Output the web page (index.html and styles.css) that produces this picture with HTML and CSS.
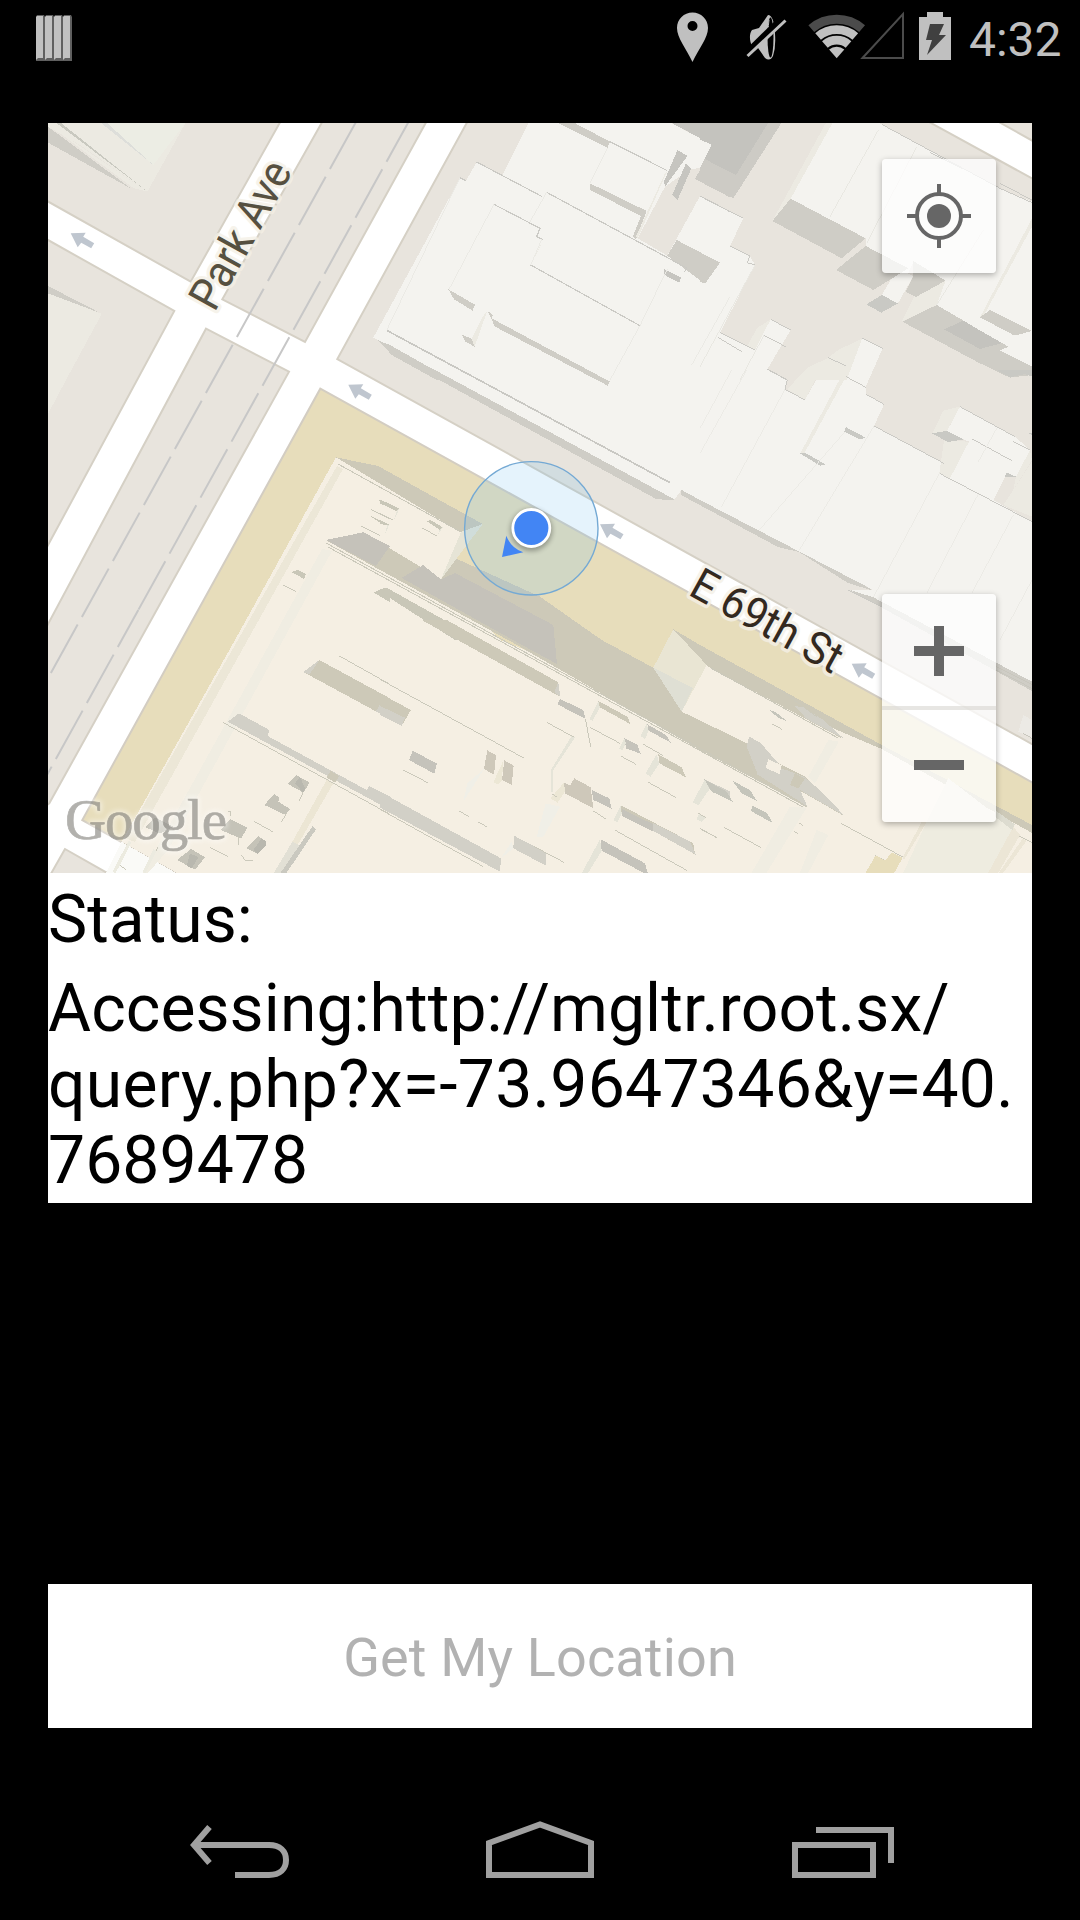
FILE: index.html
```html
<!DOCTYPE html>
<html lang="en">
<head>
<meta charset="utf-8">
<title>Get My Location</title>
<link rel="stylesheet" href="styles.css">
</head>
<body>
<div class="screen">
  <header class="status-bar">
    <svg class="notification" width="36" height="46" viewBox="0 0 36 46">
      <g id="stripe"><path d="M1 0H8L9 2V46H0V2Z" fill="#5f5f5f"/><path d="M1 1H7V43H2L0 45V2Z" fill="#c0c0c0"/></g>
      <use href="#stripe" x="9"/><use href="#stripe" x="18"/><use href="#stripe" x="27"/>
    </svg>
    <div class="status-icons">
      <svg width="33" height="75" viewBox="676 0 33 75"><path fill="#c0c0c0" fill-rule="evenodd" d="M692.5 12.5C684 12.5 677 19 677 28C677 38 686 48 692.5 62C699 48 708 38 708 28C708 19 701 12.5 692.5 12.5ZM692.5 21A5 5 0 1 1 692.5 31A5 5 0 1 1 692.5 21Z"/></svg>
      <svg class="mute" width="41" height="75" viewBox="746 0 41 75">
        <path fill="#c0c0c0" d="M768 15L759 28L752 30C749 34 749.500 41 752 46L756 45L765 58Q770 62 773 56Q776 47 775 34Q774 15 768 15Z"/>
        <ellipse cx="770.500" cy="37.500" rx="3" ry="20" fill="#000"/>
        <path d="M769 20Q767 32 771 36" stroke="#c0c0c0" fill="none"/>
        <path d="M745 55L784 17" stroke="#000" stroke-width="7"/><path d="M747.500 56L785.500 20.500" stroke="#c0c0c0" stroke-width="3"/>
      </svg>
      <svg class="wifi" width="59" height="75" viewBox="807 0 59 75" fill="none">
        <path d="M811.300 28.600A39.100 39.100 0 0 1 862.100 28.600" stroke="#4b4b4b" stroke-width="9"/>
        <g stroke="#c0c0c0" stroke-width="8.700"><path d="M818.100 36.500A28.700 28.700 0 0 1 855.300 36.500"/><path d="M824.900 44.500A18.100 18.100 0 0 1 848.500 44.500"/></g>
        <path d="M836.700 58.300L829.100 49.500A11.600 11.600 0 0 1 844.300 49.500Z" fill="#c0c0c0"/>
      </svg>
      <svg class="signal" width="44" height="75" viewBox="860 0 44 75"><path d="M862.500 58L903 14V58Z" fill="none" stroke="#4b4b4b" stroke-width="2"/></svg>
      <svg class="battery" width="32" height="75" viewBox="919 0 32 75"><path d="M927 12H943V17H951V60H919V17H927Z" fill="#c0c0c0"/><path d="M930 24H944L939 35H946L927 55L932 40H926Z" fill="#404040"/></svg>
      <span class="clock">4:32</span>
    </div>
  </header>

  <main class="content">
    <section class="panel">
      <div class="map">
        <svg class="map-canvas" width="984" height="750" viewBox="48 123 984 750">
          <defs>
            <path id="one-way" d="M0 0L15 -.5L12.500 3.500L23.500 10L20.500 15L10.500 9.500L7 14Z" fill="#bfc6cf"/>
            <filter id="glow" x="-20%" y="-40%" width="140%" height="180%"><feGaussianBlur stdDeviation="2.500"/></filter>
          </defs>
          <rect x="48" y="123" width="984" height="750" fill="#fff"/>
          <!-- city blocks -->
          <g fill="#e8e4dd" stroke="#d5d0c5" stroke-width="2">
            <path d="M40 197L190.700 281.700L283 117H40Z"/>
            <path d="M40 235.500L174.300 311L40 560Z"/>
            <path d="M325 117L222.300 299.300L305 342L429 117Z"/>
            <path d="M206 328.700L289 371.700L49.300 803.300L40 810V639Z"/>
            <path d="M470 117L337.300 359L1040 748.500V182.800L920 117Z"/>
            <path d="M990 117L1040 145V117Z"/>
            <path d="M65 849L48 879H118L106.700 872.700Z"/>
          </g>
          <path d="M320.300 388.700L1040 786.700V880H189L82.300 820Z" fill="#e7ddbb" stroke="#d3cdc2" stroke-width="2"/>
          <g stroke="#c7c7c7" stroke-width="2" stroke-dasharray="55.300 8.700">
            <path d="M356.700 120.700L47 680"/><path d="M413.300 113.300L138.300 610"/><path d="M138.300 610L47 775" stroke-dashoffset="13"/>
          </g>

          <g shape-rendering="crispEdges">
          <!-- north-west corner -->
          <g transform="translate(40 110) scale(.33333)">
            <path d="M24 38H437L322 245L120 105L24 50Z" fill="#eceae2"/>
            <path d="M185 38H437L340 165Z" fill="#ecede4"/>
            <path d="M24 50L275 237L24 98Z" fill="#cfcdc6"/>
            <path d="M24 43L322 245L280 234Z" fill="#eceae2"/>
            <path d="M48 38H62L322 245Z" fill="#c9c9c0"/>
            <path d="M182 38H200L340 165Z" fill="#dddeda"/>
            <path d="M24 540L185 612L78 810L24 912Z" fill="#eceae2"/><path d="M24 528L183 610L24 550Z" fill="#cfcdc6"/>
          </g>
          <!-- rooftops north of E 69th St -->
          <path fill="#cfcdc6" d="M373 336L392 354L656.700 499.300L674 500V480ZM681 488V495L778 547L799 552L848 583L874 591L799 546ZM850 590L1032 691V675L873 590Z"/>
          <path fill="#f4f3ef" d="M373.300 337.700L460 178.300L466 180.700L476.700 162L502.300 175L528.300 123H671L711.700 144.300L700 167.700L689 170L665 186.700L637.700 238.300L667.300 255.700L700 196L743.300 218.300L730 246L750 256L755 265L720 332.700L750 348L770.700 319.300L790.700 330L767.300 369.300L787.300 380L785 389.300L805 400L828.300 357.700L846 366L862.300 338.300L882.700 348.300L865.700 386.700V394L884 404.300L874 426L944 463.300L939.300 473.300L950 477.300L969 441.700L946.700 431.700L960 406.700L1015 436.700L1030 450L1016 476.700L1006.700 473.300L993.300 500L1032 521.700V681.700L873.300 597.300L850 590L873.300 590L700 500L681.700 490L674.300 499.300L435 370Z"/>
          <g transform="translate(380 110) scale(.33333)">
            <path fill="#cfcdc6" d="M533 38H582L690 95L683 113ZM630 220L800 303L768 387L758 380L783 318L630 240ZM890 390L1020 458L973 521L862 437ZM205 538L285 584L278 602L222 568ZM322 602L338 615L335 625L690 815L683 827L345 650ZM245 674L275 686L284 710L256 695ZM0 695L30 705L215 810H170L35 735Z"/>
            <path fill="#eceae2" d="M322 602L284 710L275 686L305 625ZM862 182L773 385L768 380L855 190ZM485 400L450 465L465 440Z"/>
            <path fill="#c6c5c0" d="M892 121L923 137L855 230L852 215ZM918 160L934 175L893 269L877 254ZM852 477L904 503L897 518L852 494ZM873 38H1050V190L978 147L995 103Z"/>
            <path fill="#cdcbc5" d="M978 147L1050 185V262L945 207Z"/>
            <path fill="none" stroke="#cbcac5" stroke-width="3.500" d="M240 203L258 212M290 156L487 260M500 247L920 474L913 487M342 283L480 355L470 380L488 388M452 465L780 647M690 95L862 182M960 258L1050 305"/>
            <path fill="none" stroke="#c9c8c3" stroke-width="5" d="M20 661L870 1118"/>
            <path fill="none" stroke="#ebeae5" stroke-width="3" d="M342 283L207 538M500 247L450 335M862 477L780 647L690 810M683 113L630 220M240 203L20 661M1050 560L935 765M485 388L452 465"/>
          </g>
          <g transform="translate(700 110) scale(.33333)">
            <path fill="#cdcbc5" d="M0 38H245L100 265L0 212Z"/><path fill="#c4c3be" d="M0 38H205L108 195L0 140Z"/><path fill="#f4f3ef" d="M0 88L35 105L0 175Z"/>
            <path fill="#eceae2" d="M378 38H398L320 266L217 333ZM497 385L640 170V200L425 445ZM212 628L170 655L142 710L165 720ZM487 685L415 720L385 743L320 775L300 810H440ZM710 585L605 635L740 360H830Z"/>
            <path fill="#f4f3ef" d="M398 38H535L900 235L996 275V770L900 722L925 710L820 650L710 585L737 512L640 455L580 590L545 555L590 480L497 408V385L272 266Z"/>
            <path fill="#cfcdc6" d="M272 266L497 385L425 445L217 333ZM497 408L625 475L520 540L408 480ZM640 453L737 512L648 561L617 545L640 500ZM710 585L925 710L900 722L996 770V795L930 803L830 755L607 635ZM870 600L996 663V675H940L840 622ZM0 428L60 458L15 521L0 515Z"/>
            <path fill="#f4f3ef" d="M612 484L640 498L594 580L545 555Z"/>
            <path fill="#c9c9c4" d="M545 555L594 580L544 608L499 583Z"/><path fill="#c4c3be" d="M790 632L910 698L840 717L732 658Z"/>
            <path fill="#f4f3ef" d="M820 650L840 622L940 678L996 663V770L900 722L925 710Z"/>
            <path fill="#eceae2" d="M840 622L996 325V350L855 610Z"/>
            <path fill="none" stroke="#cbcac5" stroke-width="3" d="M545 43L900 235L996 278M900 220L996 270M690 128L790 178M0 258L130 325M90 408L150 438L142 458L165 465M60 668L165 720M55 683L125 725M212 628L272 660M192 676L257 710M202 778L257 808M487 685L548 715M385 743L438 768"/>
            <path fill="none" stroke="#e9e8e2" stroke-width="3" d="M535 60L390 320M650 110L500 400M165 465L0 770M850 360L710 585M192 676L120 810"/>
          </g>
          <g transform="translate(700 370) scale(.33333)">
            <path fill="#eceae2" d="M315 0H360L315 90L262 58ZM418 30H432L312 252H300ZM780 110L730 122L697 190L740 185ZM732 212L807 215L750 325L718 310ZM996 275V440L910 405ZM948 320L990 240L996 270L940 360Z"/>
            <path fill="#c9c9c4" d="M300 250L318 250L376 283L360 287ZM437 171L497 203L480 209L433 185ZM740 183L792 208L745 216L694 190ZM920 307L948 320H915ZM890 0H996V20L975 12L930 22ZM985 188H996V197Z"/>
            <path fill="none" stroke="#cbcac5" stroke-width="3" d="M208 0L262 30L255 58L315 90M438 20L498 52M497 72L552 103M522 168L732 280M718 310L996 455M780 110L945 200M940 215L990 240M817 207L937 273M445 660L700 790"/>
            <path fill="none" stroke="#ecebe6" stroke-width="3" d="M95 0L0 175M140 0L0 250M255 58L65 410M435 185L178 480M522 168L298 540M718 310L520 682M835 372L680 670M940 435L815 670M996 630L900 810M890 175L835 275"/>
          </g>

          <!-- block south of E 69th St -->
          <path fill="#f5efe3" d="M336 457.300L461 532.300L441 579.300L500 640L653.300 700L681.700 711.700L706.700 665L881.700 748L1032 833V873H177L121.700 841.700L235 640Z"/>
          <path fill="#fafaf7" d="M121.700 842L106 873H176Z"/>
          <path fill="#cdc9b8" d="M336 457.300L378 466L482.700 524L461 532.300ZM673.300 629.300L700 645L881.700 745L1032 825V833L881.700 749L830 727L843 739L711 668L706 665Z"/>
          <path fill="#cdc9b8" d="M325.700 540L363.300 532.300L441 579.300L455 558L540 596.700L601.700 640L653.300 667.700L681.700 711.700L730 735L746.700 743.300L778 763L805 776.700L844 816L785 782L807 807L700 750L511.700 642L380 570Z"/>
          <path fill="#c5c2ba" d="M325.700 540L363.300 532.300L390 546L376 566ZM423 565L441 579.300L455 573L553.300 625L557 664L511 639L401.700 578Z"/>
          <path fill="#e6e4d6" d="M482.700 524L441 579.300L461 532Z"/>
          <path fill="#e9e5d3" d="M673.300 629.300L653.300 667.700L681.700 711.700L706.700 665Z"/><path fill="#dfdfd4" d="M653.300 667.700L693 688L681.700 711.700Z"/>
          <path fill="#ece7d7" d="M337 466L343 469L135 842L125 838Z"/>
          <path fill="#f0ede2" d="M322 549L332 551L168 850L148 873H143Z"/>
          <g fill="none" stroke="#cbc9bb">
            <path d="M338 464L461 532M326 543L510 644L807 807M711 668L838 738M328 547L500 641L803 807"/>
          </g>
          <g transform="translate(40 370) scale(.33333)">
            <path fill="#c9c7b8" d="M1012 388L1050 405V412ZM985 435L1048 463L1030 465ZM753 606L775 600L797 612L793 627ZM1002 668L1035 652L1050 660V697Z"/>
            <path fill="none" stroke="#cbc9bb" stroke-width="3" d="M993 418L1050 447M963 468L1020 497M730 645L768 665"/>
          </g>
          <g transform="translate(380 370) scale(.33333)">
            <path fill="#c9c7b8" d="M0 388L58 416L50 424L0 400ZM140 453L152 450L188 472L180 480ZM0 450L28 464L0 462ZM0 665L18 652L300 810H225Z"/>
            <path fill="#e6e5d9" d="M50 424L58 416L42 450ZM180 478L188 472L172 497ZM22 465L28 464L14 494Z"/>
            <path fill="none" stroke="#cbc9bb" stroke-width="3" d="M0 430L40 450M127 475L170 497"/>
          </g>
          <g transform="translate(40 620) scale(.33333)">
            <path fill="#cdc9b8" d="M790 156L838 120L1050 235V297Z"/><path fill="#d2d0c7" d="M790 156L838 120L808 164ZM1020 253L1050 268V297L1008 274ZM563 305L597 280L688 330L683 348L980 510L988 498L1050 530V570L565 306Z"/>
            <path fill="#ece6d4" d="M860 480L880 490L770 680L757 665Z"/><path fill="#cdc9b8" d="M872 453L898 468L885 488L860 472Z"/>
            <path fill="#e2e0d5" d="M757 665L778 675L735 758H702Z"/><path fill="#cac9c0" d="M818 618L828 628L740 758H722Z"/>
            <path fill="#c5c3b8" d="M768 465L809 488L790 518L744 492ZM702 522L718 532L715 545L750 567L737 585L673 555ZM570 597L622 623L603 656L543 630ZM453 687L495 712L465 749L411 720ZM345 592L400 620L360 641L317 622ZM655 648L678 664L653 702L620 685Z"/>
            <path fill="#b9b8af" d="M765 490L780 470L795 505L790 518ZM655 648L665 655L640 690L653 702L678 675V664ZM450 700L475 712L455 745L440 737Z"/>
            <path fill="none" stroke="#cbc9bb" stroke-width="3" d="M898 108L1050 193M550 308L1050 583M642 604L698 635M510 682L564 710M790 515L778 542M740 580L724 606M597 650V676M605 706L617 723H638M240 736L258 748M565 574H571V587M355 680L325 730"/>
            <path fill="none" stroke="#ecebe0" stroke-width="10" d="M270 665L222 758M345 690L312 758"/>
          </g>
          <g transform="translate(380 620) scale(.33333)">
            <path fill="#cdc9b8" d="M125 0H200L535 187L540 230ZM0 220L93 270L65 317L0 285ZM655 243L742 290L752 313L660 262ZM835 403L905 442L918 472L838 430ZM723 556L940 670L945 703L725 580Z"/>
            <path fill="#d2d0c7" d="M0 258L75 293L65 317L0 285ZM535 187L541 230L523 217ZM0 515L363 715L360 755L0 563ZM402 647L498 698V737L400 685ZM820 610L930 665L947 704L820 633ZM975 478L1050 515V540L990 510Z"/>
            <path fill="#c5c3bb" d="M98 393L171 430L163 461L87 420ZM540 237L610 270L616 296L532 253ZM802 313L858 345L872 368L806 332ZM733 354L772 374L782 401L738 385ZM725 567L818 612V634L725 588ZM662 658L795 730L803 758H790L665 692ZM635 510L688 535L695 566L640 540Z"/>
            <path fill="#cec8ba" d="M322 391L348 405L342 464L312 447L315 430ZM373 421L401 437L395 494L366 480ZM583 475L632 502L640 565L555 520L552 488L570 497Z"/>
            <path fill="#e5e4d8" d="M655 243L660 262L638 302L628 297ZM800 312L806 332L795 357L782 348ZM733 354L738 370L728 390L717 387ZM830 403L838 430L812 470L797 460ZM723 556L725 580L713 607L700 600ZM660 658L665 692L625 758H606ZM975 478L988 508L955 556L938 547ZM575 347L585 352L520 450V515H513V450ZM958 580L977 592L965 605L949 598Z"/>
            <path fill="#ece7d5" d="M370 422L366 480L355 494L340 487ZM552 488L555 515L533 548L511 535Z"/>
            <path fill="#f0efe7" d="M497 550L540 560L490 650H470ZM312 447L250 545L262 490ZM363 715L400 685L395 665Z"/>
            <path fill="none" stroke="#cbc9bb" stroke-width="3" d="M0 178L433 415M500 307L583 352M616 296L632 380M630 322L720 370M790 373L850 407M724 409L768 433M805 487L887 532M640 573L678 597M706 631L920 751M0 568L310 740M238 573L266 590M295 606L320 620M70 450L143 488M463 680L552 727M515 522L530 530M955 580L977 592M963 628L1010 652M1033 622L1050 632M995 147L1050 175"/>
          </g>
          <g transform="translate(700 620) scale(.33333)">
            <path fill="#f0ede2" d="M385 360L417 365L345 490L325 470ZM270 560L320 563L200 758H155ZM350 630L385 645L325 758H300Z"/>
            <path fill="#d2d0c7" d="M285 258L310 262L370 300L432 356L320 297ZM198 437L260 450L315 472L365 515L434 588L300 510L322 559L170 462ZM147 350L180 367L235 430L205 425L195 455L172 460L140 380Z"/>
            <path fill="#cdc9b8" d="M285 460L315 475L295 505L270 495Z"/><path fill="#f5efe3" d="M205 418L245 436L238 463L197 443Z"/>
            <path fill="#c5c5bb" d="M208 270L225 275L260 303L235 294ZM13 478L80 515L98 545L35 515ZM97 482L150 510L170 542L125 520ZM158 558L200 578L219 610L153 573Z"/>
            <path fill="none" stroke="#cbc9bb" stroke-width="3" d="M217 312L246 328M0 625L50 653M72 622L183 683M423 610L610 712M525 706L556 723M297 608L308 616M282 634L294 640M955 647L996 668M0 583L18 592M235 205L350 290"/>
            <path fill="#e7ddbb" d="M527 706L556 722L575 697L608 713L583 758H497Z"/><path fill="#eeece0" d="M745 475L940 625L865 758H610L680 606Z"/>
            <path fill="#ece6d6" d="M665 606H680L612 720L608 713ZM940 620L960 645L895 758H865ZM968 656L980 662L910 758H897Z"/>
            <path fill="#dddcd0" d="M885 570L945 613L937 630L885 590Z"/><path fill="#eceae5" d="M970 285L996 300V355L955 335Z"/>
            <path fill="none" stroke="#c9c7be" stroke-width="3" d="M888 140L996 193M888 150L996 205M968 340L996 355"/>
          </g>
          </g>

          <use href="#one-way" x="70.700" y="233.300"/><use href="#one-way" x="348.300" y="384.700"/>
          <use href="#one-way" x="600" y="524.300"/><use href="#one-way" x="851.700" y="663.700"/>
          <g class="street">
            <text class="park" transform="translate(214.500 313) rotate(-61)" textLength="162" lengthAdjust="spacingAndGlyphs">Park Ave</text>
            <text class="e69" transform="translate(687 594) rotate(28.900)" textLength="166" lengthAdjust="spacingAndGlyphs">E 69th St</text>
          </g>

          <!-- current position -->
          <circle cx="531.300" cy="528.300" r="66.700" fill="rgba(110,190,240,.18)" stroke="#74a9d4" stroke-width="1.400"/>
          <circle cx="531.300" cy="530" r="21" fill="#000" opacity=".3" filter="url(#glow)"/>
          <circle cx="531.300" cy="528" r="18.500" fill="#4285f4" stroke="#fff" stroke-width="2.800"/>
          <path d="M506.300 535.700L502 557L523.300 552.300Q511 548 506.300 535.700Z" fill="#4285f4"/>

          <g class="logo"><text class="halo" x="65" y="838.500" textLength="162" filter="url(#glow)">Google</text><text class="mark" x="65" y="838.500" textLength="162">Google</text></g>
        </svg>
        <div class="map-control locate">
          <svg width="114" height="114" viewBox="-57 -57 114 114"><circle r="22" fill="none" stroke="#666" stroke-width="4"/><circle r="12" fill="#666"/><path d="M0 -32V-23M0 23V32M-32 0H-23M23 0H32" stroke="#666" stroke-width="4"/></svg>
        </div>
        <div class="map-control zoom">
          <svg width="114" height="112" viewBox="0 0 114 112"><path d="M32 57H82M57 32V82" stroke="#666" stroke-width="10"/></svg>
          <div class="divider"></div>
          <svg width="114" height="112" viewBox="0 0 114 112"><path d="M32 55H82" stroke="#666" stroke-width="10"/></svg>
        </div>
      </div>
      <p class="label">Status:</p>
      <p class="message"><span>Accessing:http://mgltr.root.sx/</span><br><span class="query">query.php?x=-73.9647346&amp;y=40.</span><br><span>7689478</span></p>
    </section>
    <button class="get-location" disabled>Get My Location</button>
  </main>

  <nav class="nav-bar">
    <svg width="100" height="60" viewBox="190 1820 100 60"><path d="M209.500 1827L194 1845L209.500 1863M193 1845H269C280 1845 286 1851 286 1860S280 1875 269 1875H235" fill="none" stroke="#a0a0a0" stroke-width="6"/></svg>
    <svg class="home" width="108" height="60" viewBox="486 1820 108 60"><path d="M489 1843L540 1824.500L591 1843V1875H489Z" fill="none" stroke="#a0a0a0" stroke-width="6"/></svg>
    <svg width="102" height="60" viewBox="792 1820 102 60"><path d="M795 1845H873V1875H795ZM816 1830H891V1863" fill="none" stroke="#a0a0a0" stroke-width="6"/></svg>
  </nav>
</div>
</body>
</html>
```
FILE: styles.css
```css
* { box-sizing: border-box; }
body { margin: 0; background: #000; font-family: Roboto, sans-serif; }
svg { display: block; flex: none; }
.screen { width: 1080px; height: 1920px; display: flex; flex-direction: column; background: #000; overflow: hidden; }
.status-bar { height: 75px; display: flex; justify-content: space-between; padding: 0 18px 0 36px; }
.notification { margin-top: 15px; }
.status-icons { display: flex; }
.mute { margin-left: 37px; }
.wifi { margin-left: 20px; }
.signal { margin-left: -6px; }
.battery { margin-left: 15px; }
.clock { width: 93px; margin-left: 18px; font-size: 48px; line-height: 79px; color: #c0c0c0; white-space: nowrap; }
.content { flex: 1; display: flex; flex-direction: column; justify-content: space-between; padding: 48px 48px 48px; }
.panel { height: 1080px; background: #fff; color: #000; }
.map { position: relative; width: 984px; height: 750px; overflow: hidden; }
.label, .message { margin: 0; font-size: 66px; line-height: 76px; white-space: nowrap; }
.label { padding-top: 9px; }
.message { padding-top: 13px; letter-spacing: .08px; }
.query { letter-spacing: .3px; }
.street { font-size: 45px; stroke-linejoin: round; paint-order: stroke; stroke: rgba(244, 240, 230, .8); stroke-width: 7px; }
.park { fill: #565040; }
.e69 { fill: #33291f; }
.logo { font-family: "Liberation Serif", serif; font-size: 57px; }
.halo { fill: #fff; stroke: #fff; stroke-width: 4px; opacity: .5; }
.mark { fill: #6c6a64; stroke: #6c6a64; stroke-width: .7px; opacity: .52; }
.map-control { position: absolute; right: 36px; width: 114px; border-radius: 4px; background: rgba(255, 255, 255, .75); box-shadow: 0 2px 6px rgba(0, 0, 0, .3); }
.locate { top: 36px; height: 114px; }
.zoom { top: 471px; height: 228px; }
.divider { height: 4px; background: rgba(215, 214, 208, .6); }
.get-location { height: 144px; padding: 3px 0 0; border: 0; background: #fff; color: #b2b2b2; font: 54px Roboto, sans-serif; letter-spacing: .15px; }
.nav-bar { height: 144px; display: flex; justify-content: space-between; padding: 44px 186px 0 190px; }
.home { margin-right: 2px; }
```
